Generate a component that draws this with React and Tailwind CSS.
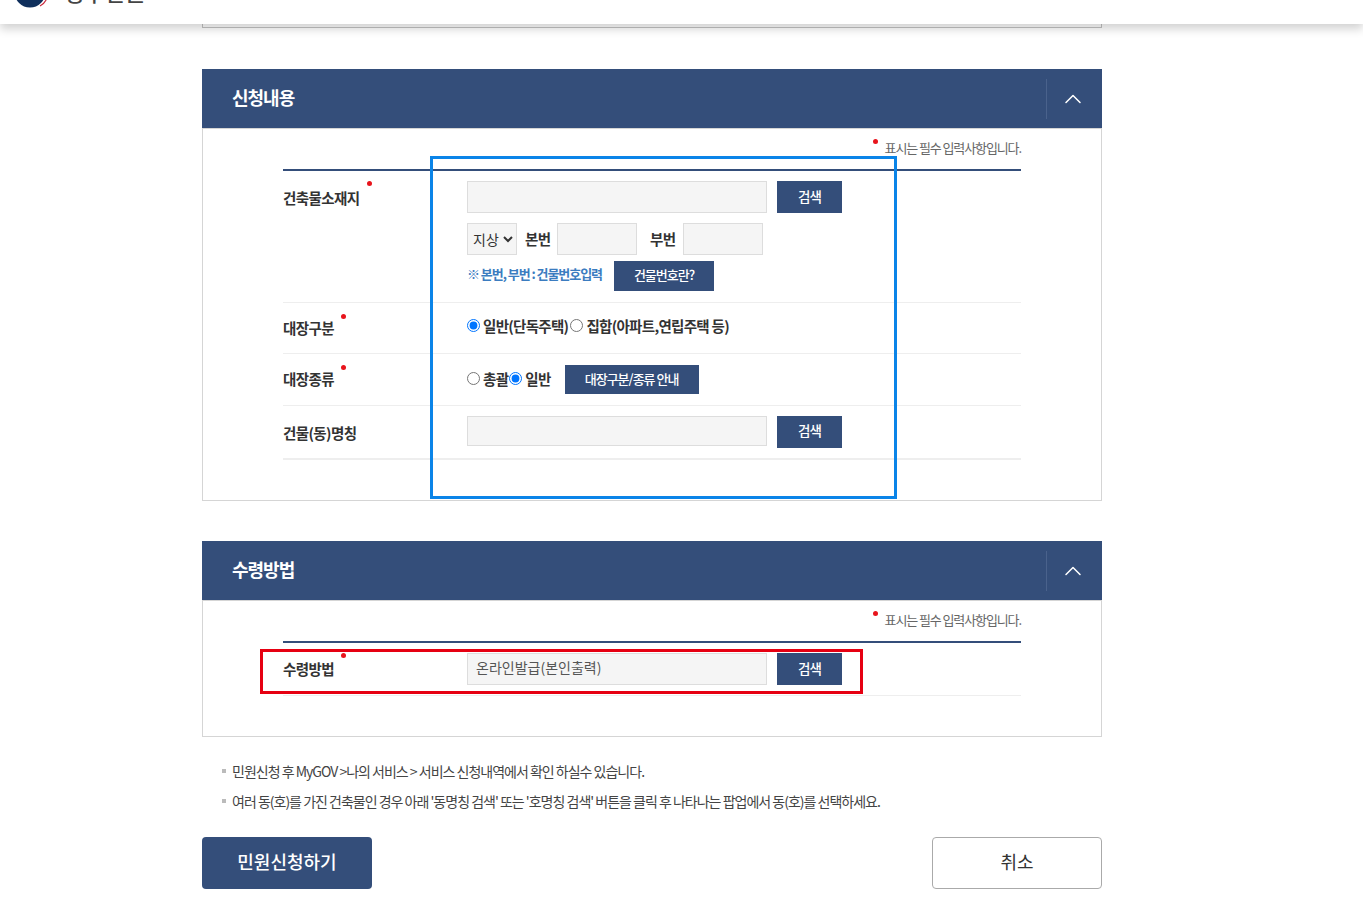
import React from 'react';
import { ChevronUp } from 'lucide-react';

const kr = { fontFamily: '"Noto Sans CJK KR", "Noto Sans", sans-serif' };

const Dot = ({ className }) => (
  <span className={`absolute w-[5px] h-[5px] rounded-full bg-[#e8141c] ${className}`} />
);

const Radio = ({ checked }) => (
  <input type="radio" checked={checked} readOnly className="w-[13px] h-[13px] m-0 accent-[#0075ff] shrink-0" />
);

const SearchBtn = () => (
  <button className="w-[65px] h-[32px] pb-[2px] bg-[#344e7a] text-white text-[13.5px] font-medium tracking-[-1px] shrink-0">검색</button>
);

const SectionHead = ({ title }) => (
  <div className="h-[60px] bg-[#344e7a] border-b border-[#d5d5d5] flex items-center justify-between">
    <h2 className="pl-[30px] pb-[2px] text-white text-[18px] font-bold tracking-[-1px]">{title}</h2>
    <div className="w-[56px] h-[40px] pr-[4px] border-l border-[#4a628c] flex items-center justify-center">
      <ChevronUp size={28} strokeWidth={1.3} className="text-white" />
    </div>
  </div>
);

const Required = () => (
  <div className="relative h-[40px] flex justify-end items-start pt-[9px] text-[13px] text-[#666] tracking-[-1.1px] leading-[20px]">
    <Dot className="right-[143px] top-[10px]" />
    표시는 필수 입력사항입니다.
  </div>
);

const Label = ({ children, dot }) => (
  <div className="relative w-[184px] shrink-0 text-[14.5px] font-bold text-[#333] tracking-[-0.6px]">
    {children}
    {dot}
  </div>
);

export default function App() {
  return (
    <div className="relative w-full h-[906px] bg-white overflow-hidden" style={kr}>
      <header className="relative z-10 h-[24px] bg-white shadow-[0_5px_10px_rgba(0,0,0,0.18)] overflow-hidden">
        <div className="flex items-end h-[8px] pl-[14px]">
          <svg width="36" height="36" viewBox="0 0 36 36" className="shrink-0 -mt-[28px]">
            <circle cx="16" cy="20" r="15.5" fill="#0f2f5c" />
            <path d="M26 34c4-2 7-6 8-12" fill="none" stroke="#c8283c" strokeWidth="1.2" />
          </svg>
          <span className="ml-[14px] mb-[6px] text-[22px] font-medium leading-[22px] text-[#444]">정부민원</span>
        </div>
      </header>

      <main className="ml-[202px] w-[900px]">
        <div className="h-[4px] border border-t-0 border-[#c4c4c4] bg-white" />

        <section className="mt-[41px]">
          <SectionHead title="신청내용" />
          <div className="h-[372px] border border-t-0 border-[#d5d5d5] px-[80px]">
            <Required />
            <div className="border-t-2 border-[#344e7a]">
              <div className="flex h-[132px] pt-[10px] border-b border-[#eee]">
                <Label dot={<Dot className="left-[84px] top-[0px]" />}>
                  <span className="block mt-[6px]">건축물소재지</span>
                </Label>
                <div>
                  <div className="flex gap-[10px]">
                    <input className="w-[300px] h-[32px] bg-[#f5f5f5] border border-[#ddd]" />
                    <SearchBtn />
                  </div>
                  <div className="flex items-center mt-[10px] h-[32px] text-[14.5px] font-bold text-[#333] tracking-[-0.7px]">
                    <select className="w-[50px] h-[32px] bg-[#f5f5f5] border border-[#ddd] text-[14px] font-normal tracking-normal pl-[1px]">
                      <option>지상</option>
                    </select>
                    <span className="ml-[8px] w-[32px]">본번</span>
                    <input className="w-[80px] h-[32px] bg-[#f5f5f5] border border-[#ddd]" />
                    <span className="ml-[13px] w-[33px]">부번</span>
                    <input className="w-[80px] h-[32px] bg-[#f5f5f5] border border-[#ddd]" />
                  </div>
                  <div className="flex items-center mt-[6px]">
                    <span className="w-[147px] -mt-[4px] text-[13px] font-bold text-[#3b7cc0] tracking-[-1.05px]">※ 본번, 부번 : 건물번호입력</span>
                    <button className="w-[100px] h-[30px] pb-[2px] bg-[#344e7a] text-white text-[13px] font-medium tracking-[-1px]">건물번호란?</button>
                  </div>
                </div>
              </div>

              <div className="flex items-center h-[51px] border-b border-[#eee]">
                <Label dot={<Dot className="left-[58px] -top-[3px]" />}>대장구분</Label>
                <div className="flex items-center text-[14.5px] font-bold text-[#333] tracking-[-0.7px] -mt-[5px]">
                  <Radio checked />
                  <span className="ml-[3px] mr-[2px]">일반(단독주택)</span>
                  <Radio checked={false} />
                  <span className="ml-[3px]">집합(아파트,연립주택 등)</span>
                </div>
              </div>

              <div className="flex items-center h-[52px] border-b border-[#eee]">
                <Label dot={<Dot className="left-[58px] -top-[5px]" />}>
                  <span className="block -mt-[2px]">대장종류</span>
                </Label>
                <div className="flex items-center text-[14.5px] font-bold text-[#333] tracking-[-0.7px]">
                  <span className="flex items-center -mt-[2px]">
                    <Radio checked={false} />
                    <span className="ml-[3px] mr-[1px]">총괄</span>
                    <Radio checked />
                    <span className="ml-[3px] mr-[1px]">일반</span>
                  </span>
                  <button className="ml-[13px] w-[134px] h-[29px] pb-[2px] bg-[#344e7a] text-white text-[13px] font-medium tracking-[-1px]">대장구분/종류 안내</button>
                </div>
              </div>

              <div className="flex items-center h-[54px] border-b-2 border-[#eee]">
                <Label>
                  <span className="block mt-[2px]">건물(동)명칭</span>
                </Label>
                <div className="flex gap-[10px] -mt-[1px]">
                  <input className="w-[300px] h-[30px] bg-[#f5f5f5] border border-[#ddd]" />
                  <SearchBtn />
                </div>
              </div>
            </div>
          </div>
        </section>

        <section className="mt-[40px]">
          <SectionHead title="수령방법" />
          <div className="h-[136px] border border-t-0 border-[#d5d5d5] px-[80px]">
            <Required />
            <div className="border-t-2 border-[#344e7a]">
              <div className="flex h-[53px] pt-[10px] border-b border-[#eee]">
                <Label dot={<Dot className="left-[58px] top-[0px]" />}>
                  <span className="block mt-[5px]">수령방법</span>
                </Label>
                <div className="flex gap-[10px]">
                  <input
                    readOnly
                    value="온라인발급(본인출력)"
                    className="w-[300px] h-[32px] bg-[#f5f5f5] border border-[#ddd] pl-[8px] pb-[5px] text-[14px] text-[#555]"
                  />
                  <SearchBtn />
                </div>
              </div>
            </div>
          </div>
        </section>

        <ul className="mt-[19px] text-[14px] text-[#444] tracking-[-1px]">
          <li className="flex items-center h-[30px]">
            <span className="ml-[20px] mr-[6px] w-[4px] h-[4px] bg-[#bbb]" />
            민원신청 후 MyGOV &gt;나의 서비스 &gt; 서비스 신청내역에서 확인 하실수 있습니다.
          </li>
          <li className="flex items-center h-[30px]">
            <span className="ml-[20px] mr-[6px] w-[4px] h-[4px] bg-[#bbb]" />
            여러 동(호)를 가진 건축물인 경우 아래 '동명칭 검색' 또는 '호명칭 검색' 버튼을 클릭 후 나타나는 팝업에서 동(호)를 선택하세요.
          </li>
        </ul>

        <div className="flex justify-between mt-[21px]">
          <button className="w-[170px] h-[52px] pb-[3px] rounded-[4px] bg-[#344e7a] text-white text-[18px] font-medium">민원신청하기</button>
          <button className="w-[170px] h-[52px] pb-[3px] rounded-[4px] bg-white border border-[#aaa] text-[#333] text-[18px]">취소</button>
        </div>
      </main>

      {/* annotation boxes drawn over the capture */}
      <div className="absolute left-[430px] top-[156px] w-[467px] h-[343px] border-[3px] border-[#0a84e8]" />
      <div className="absolute left-[260px] top-[649px] w-[603px] h-[45px] border-[3px] border-[#e60012]" />
    </div>
  );
}
